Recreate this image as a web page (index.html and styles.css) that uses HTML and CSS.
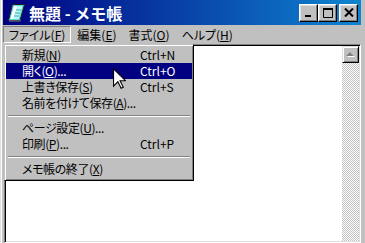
FILE: index.html
```html
<!DOCTYPE html>
<html lang="ja">
<head>
    <meta charset="UTF-8">
    <meta name="viewport" content="width=device-width, initial-scale=1.0">
    <title>無題 - メモ帳</title>
    <link rel="stylesheet" href="styles.css">
</head>
<body>
    <div class="window">
        <div class="titlebar">
            <svg class="app-icon" width="19" height="19" viewBox="0 0 19 19">
                <path d="M5.5 1.5 L17.5 1.5 L13 17.5 L1.5 17.5 Z" fill="#60d8d8" stroke="#202020" stroke-width="1"/>
                <path d="M7 3 L15.5 3 L11.5 16 L3.5 16 Z" fill="#b8f8f8"/>
                <path d="M7 3 L10 3 L6 16 L3.5 16 Z" fill="#ffffff"/>
                <path d="M9 7 L14 7 M8 10 L13 10 M7 13 L12 13" stroke="#40a8a8" stroke-width="1"/>
                <path d="M2 18 L13 18 L13.5 17" stroke="#808080" stroke-width="1" fill="none"/>
            </svg>
            <span class="title">無題 - メモ帳</span>
            <div class="controls">
                <div class="ctl">
                    <svg width="9" height="9" viewBox="0 0 9 9"><rect x="1" y="7" width="6" height="2" fill="#000"/></svg>
                </div>
                <div class="ctl">
                    <svg width="10" height="10" viewBox="0 0 10 10"><path d="M0.5 1.5 H9.5 V9.5 H0.5 Z" fill="none" stroke="#000"/><rect x="0" y="0" width="10" height="2" fill="#000"/></svg>
                </div>
                <div class="ctl close">
                    <svg width="10" height="9" viewBox="0 0 10 9"><path d="M1 0.5 L9 8.5 M9 0.5 L1 8.5" stroke="#000" stroke-width="2"/></svg>
                </div>
            </div>
        </div>

        <div class="menubar">
            <span class="menu-item active">ファイル(<u>F</u>)</span>
            <span class="menu-item">編集(<u>E</u>)</span>
            <span class="menu-item">書式(<u>O</u>)</span>
            <span class="menu-item">ヘルプ(<u>H</u>)</span>
        </div>

        <div class="editor">
            <div class="text-area"></div>
            <div class="scrollbar">
                <div class="sb-btn">
                    <svg width="9" height="6" viewBox="0 0 9 6">
                        <path d="M5 1 L9 5 L1 5 Z" fill="#fff"/>
                        <path d="M4 0 L8 4 L0 4 Z" fill="#808080"/>
                    </svg>
                </div>
                <div class="sb-track"></div>
            </div>
        </div>

        <div class="dropdown">
            <div class="dd-item"><span>新規(<u>N</u>)</span><span>Ctrl+N</span></div>
            <div class="dd-item selected"><span>開く(<u>O</u>)...</span><span>Ctrl+O</span></div>
            <div class="dd-item"><span>上書き保存(<u>S</u>)</span><span>Ctrl+S</span></div>
            <div class="dd-item"><span>名前を付けて保存(<u>A</u>)...</span><span></span></div>
            <div class="dd-sep"></div>
            <div class="dd-item"><span>ページ設定(<u>U</u>)...</span><span></span></div>
            <div class="dd-item"><span>印刷(<u>P</u>)...</span><span>Ctrl+P</span></div>
            <div class="dd-sep"></div>
            <div class="dd-item"><span>メモ帳の終了(<u>X</u>)</span><span></span></div>
        </div>

        <svg class="cursor" width="13" height="21" viewBox="0 0 12 19">
            <path d="M0.5 0.5 L0.5 16.5 L4.5 12.5 L7.5 18.5 L9.5 17.5 L6.5 11.5 L11.5 11.5 Z" fill="#fff" stroke="#000" stroke-width="1"/>
        </svg>
    </div>
</body>
</html>
```

FILE: styles.css
```css
* {
    box-sizing: border-box;
}
body {
    margin: 0;
    width: 365px;
    height: 243px;
    overflow: hidden;
    font-family: "Noto Sans CJK JP", sans-serif;
    font-size: 12px;
    font-feature-settings: "palt";
    color: #000;
}
.window {
    position: relative;
    height: 243px;
    background: #c0c0c0;
    padding: 0 4px 0 3px;
    box-shadow: inset 1px 0 #dfdfdf, inset 2px 0 #fff;
    display: flex;
    flex-direction: column;
}
.titlebar {
    height: 25px;
    background: linear-gradient(90deg, #000080, #1084d0);
    display: flex;
    align-items: center;
    padding: 0 3px 0 4px;
}
.app-icon {
    flex: none;
}
.title {
    color: #fff;
    font-size: 16px;
    font-weight: bold;
    margin-left: 3px;
    white-space: pre;
    flex: 1;
    line-height: 1;
    font-feature-settings: normal;
}
.controls {
    display: flex;
    align-items: center;
}
.ctl {
    width: 19px;
    height: 18px;
    background: #c0c0c0;
    border: 1px solid;
    border-color: #fff #000 #000 #fff;
    box-shadow: inset -1px -1px #808080, inset 1px 1px #dfdfdf;
    display: flex;
    align-items: center;
    justify-content: center;
}
.ctl svg {
    display: block;
}
.close {
    margin-left: 2px;
}
.menubar {
    height: 19px;
    display: flex;
    align-items: center;
}
.menu-item {
    border: 1px solid transparent;
    padding: 0 5px;
    height: 17px;
    line-height: 15px;
    white-space: nowrap;
}
.menu-item.active {
    border-color: #808080 #fff #fff #808080;
}
.editor {
    flex: 1;
    margin-left: 1px;
    display: flex;
    border: 1px solid;
    border-color: #808080 #fff #fff #808080;
    box-shadow: inset 1px 1px #000, inset -1px -1px #dfdfdf;
    padding: 1px;
}
.text-area {
    flex: 1;
    background: #fff;
}
.scrollbar {
    width: 17px;
    display: flex;
    flex-direction: column;
}
.sb-btn {
    height: 17px;
    background: #c0c0c0;
    border: 1px solid;
    border-color: #dfdfdf #000 #000 #dfdfdf;
    box-shadow: inset 1px 1px #fff, inset -1px -1px #808080;
    display: flex;
    align-items: center;
    justify-content: center;
}
.sb-track {
    flex: 1;
    background: repeating-conic-gradient(#c0c0c0 0 25%, #fff 0 50%) 0 0 / 2px 2px;
}
.dropdown {
    position: absolute;
    left: 4px;
    top: 44px;
    width: 190px;
    background: #c0c0c0;
    border: 1px solid;
    border-color: #c0c0c0 #000 #000 #c0c0c0;
    box-shadow: inset 1px 1px #fff, inset -1px -1px #808080;
    padding: 2px 1px 3px 1px;
}
.dd-item {
    height: 16px;
    line-height: 16px;
    padding-left: 16px;
    display: grid;
    grid-template-columns: 118px 1fr;
    white-space: nowrap;
}
.dd-item > span:first-child {
    letter-spacing: -0.4px;
}
.dd-item.selected {
    background: #000080;
    color: #fff;
}
.dd-sep {
    height: 2px;
    margin: 4px 2px 3px;
    border-top: 1px solid #808080;
    border-bottom: 1px solid #fff;
}
.cursor {
    position: absolute;
    left: 113px;
    top: 68px;
}
```
